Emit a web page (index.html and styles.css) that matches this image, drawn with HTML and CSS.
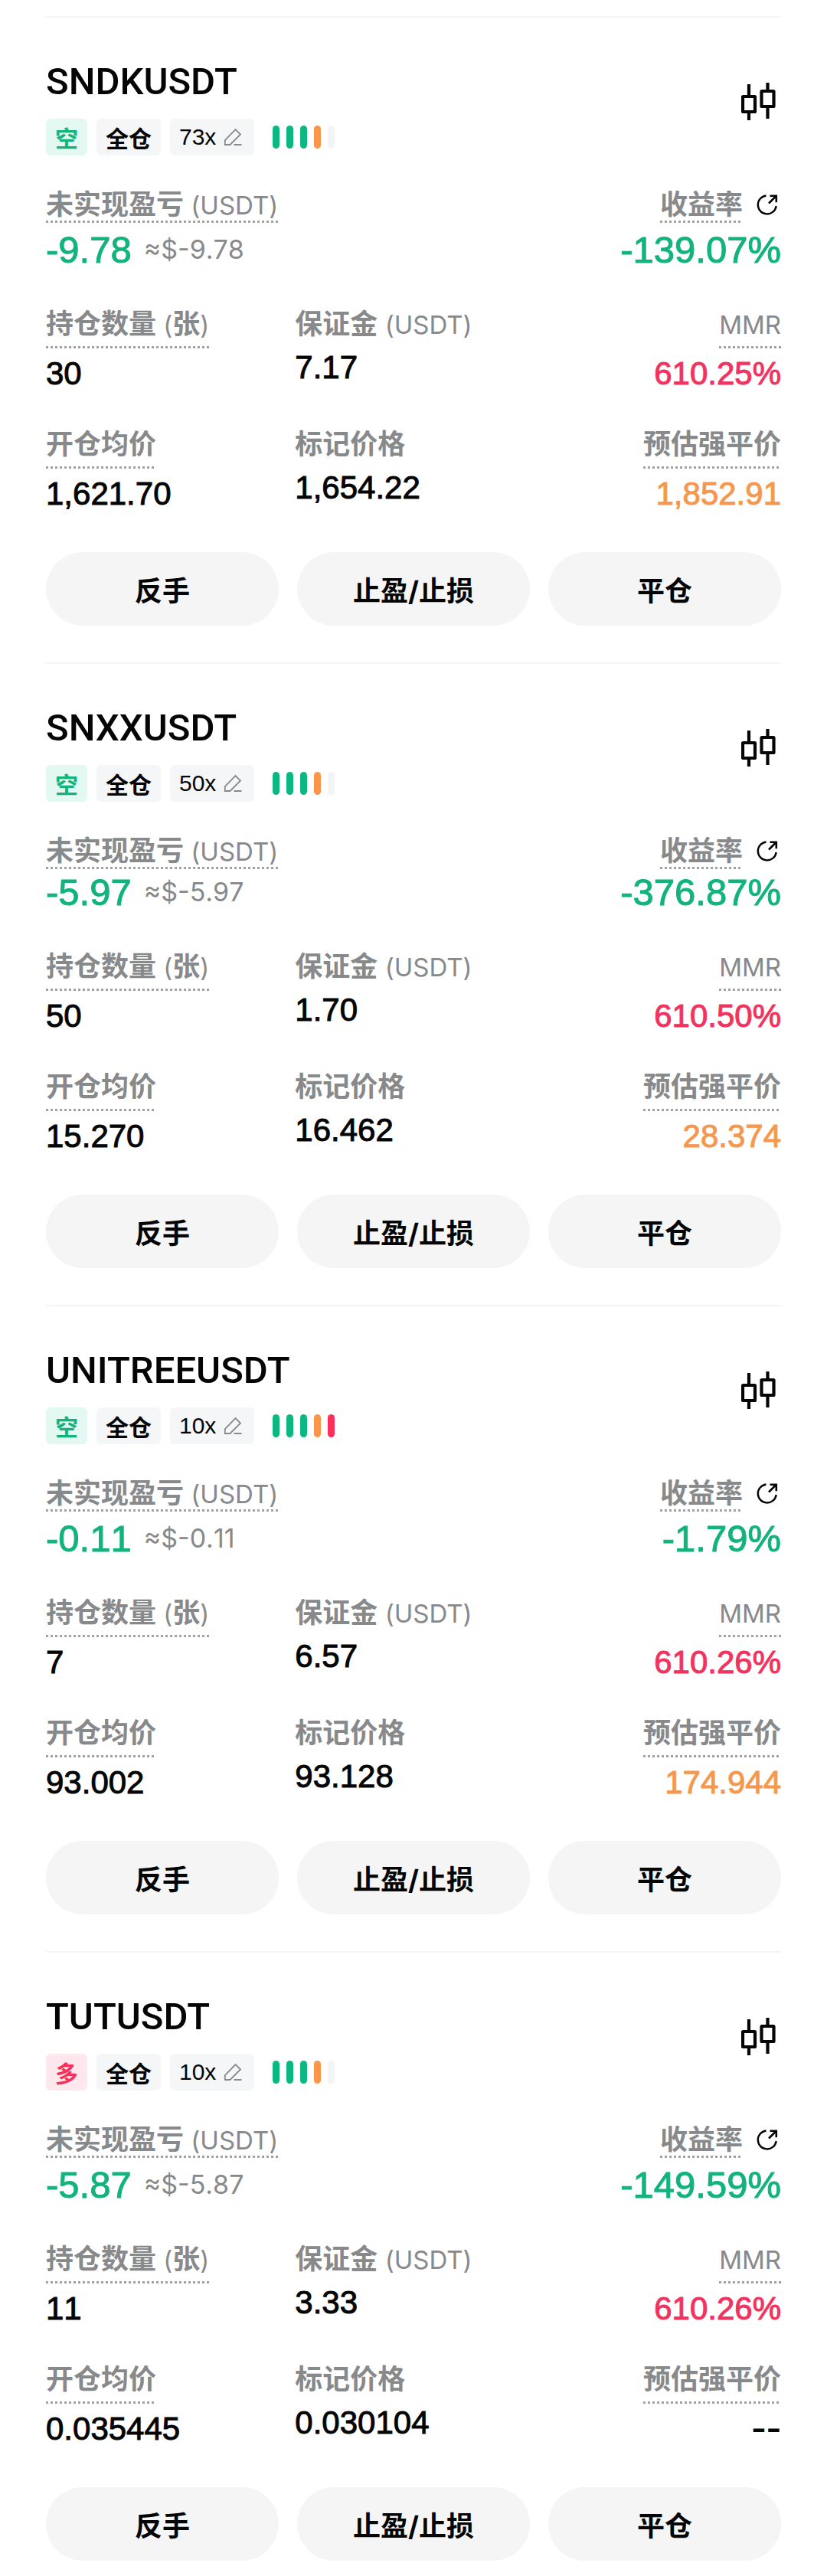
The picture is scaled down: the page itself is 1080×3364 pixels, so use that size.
FILE: index.html
```html
<!DOCTYPE html>
<html lang="zh-CN">
<head>
    <meta charset="UTF-8">
    <meta name="viewport" content="width=device-width, initial-scale=1.0">
    <title>持仓</title>
    <link rel="stylesheet" href="styles.css">
</head>
<body>
    <svg class="sprite" aria-hidden="true">
        <symbol id="icon-chart" viewBox="0 0 48 52">
            <path d="M10 3v15M10 40v10M34.500 1v10M34.500 33v15" fill="none" stroke="currentColor" stroke-width="4.200"/>
            <rect x="2" y="19" width="16" height="20" rx="0.500" fill="none" stroke="currentColor" stroke-width="4.200" stroke-linejoin="round"/>
            <rect x="26.500" y="12" width="16" height="20" rx="0.500" fill="none" stroke="currentColor" stroke-width="4.200" stroke-linejoin="round"/>
        </symbol>
        <symbol id="icon-edit" viewBox="0 0 24 24">
            <path d="M1.800 22v-6L15.500 2l6.500 6.500L8.500 22z M13.500 22H23.500" fill="none" stroke="currentColor" stroke-width="1.800"/>
        </symbol>
        <symbol id="icon-share" viewBox="0 0 28 28">
            <path d="M12.500 2.500A12 12 0 1 0 25.700 16" fill="none" stroke="currentColor" stroke-width="2.400"/>
            <path d="M16 12.500L25.500 3M17.500 2.700h8.300v8.500" fill="none" stroke="currentColor" stroke-width="2.600"/>
        </symbol>
    </svg>

    <main class="positions">
        <section class="card">
            <div class="header">
                <div>
                    <h2 class="symbol">SNDKUSDT</h2>
                    <div class="tags">
                        <span class="tag short">空</span>
                        <span class="tag">全仓</span>
                        <button class="tag leverage">73x <svg><use href="#icon-edit"/></svg></button>
                        <div class="risk"><i></i><i></i><i></i><i class="warn"></i><i class="off"></i></div>
                    </div>
                </div>
                <button class="chart" aria-label="K线"><svg><use href="#icon-chart"/></svg></button>
            </div>
            <div class="pnl">
                <div>
                    <div class="label tip">未实现盈亏<span class="unit"> (USDT)</span></div>
                    <div class="big">-9.78 <small>≈$-9.78</small></div>
                </div>
                <div class="right">
                    <div class="roi"><span class="label tip">收益率</span><button class="share" aria-label="分享"><svg><use href="#icon-share"/></svg></button></div>
                    <div class="big">-139.07%</div>
                </div>
            </div>
            <div class="grid">
                <div>
                    <div class="label tip low">持仓数量<span class="unit"> (</span>张<span class="unit">)</span></div>
                    <div class="value">30</div>
                </div>
                <div>
                    <div class="label">保证金<span class="unit"> (USDT)</span></div>
                    <div class="value">7.17</div>
                </div>
                <div class="right">
                    <div class="label tip low"><span class="unit">MMR</span></div>
                    <div class="value red">610.25%</div>
                </div>
                <div>
                    <div class="label tip low">开仓均价</div>
                    <div class="value">1,621.70</div>
                </div>
                <div>
                    <div class="label">标记价格</div>
                    <div class="value">1,654.22</div>
                </div>
                <div class="right">
                    <div class="label tip low">预估强平价</div>
                    <div class="value orange">1,852.91</div>
                </div>
            </div>
            <div class="actions">
                <button>反手</button>
                <button>止盈/止损</button>
                <button>平仓</button>
            </div>
        </section>

        <section class="card compact">
            <div class="header">
                <div>
                    <h2 class="symbol">SNXXUSDT</h2>
                    <div class="tags">
                        <span class="tag short">空</span>
                        <span class="tag">全仓</span>
                        <button class="tag leverage">50x <svg><use href="#icon-edit"/></svg></button>
                        <div class="risk"><i></i><i></i><i></i><i class="warn"></i><i class="off"></i></div>
                    </div>
                </div>
                <button class="chart" aria-label="K线"><svg><use href="#icon-chart"/></svg></button>
            </div>
            <div class="pnl">
                <div>
                    <div class="label tip">未实现盈亏<span class="unit"> (USDT)</span></div>
                    <div class="big">-5.97 <small>≈$-5.97</small></div>
                </div>
                <div class="right">
                    <div class="roi"><span class="label tip">收益率</span><button class="share" aria-label="分享"><svg><use href="#icon-share"/></svg></button></div>
                    <div class="big">-376.87%</div>
                </div>
            </div>
            <div class="grid">
                <div>
                    <div class="label tip low">持仓数量<span class="unit"> (</span>张<span class="unit">)</span></div>
                    <div class="value">50</div>
                </div>
                <div>
                    <div class="label">保证金<span class="unit"> (USDT)</span></div>
                    <div class="value">1.70</div>
                </div>
                <div class="right">
                    <div class="label tip low"><span class="unit">MMR</span></div>
                    <div class="value red">610.50%</div>
                </div>
                <div>
                    <div class="label tip low">开仓均价</div>
                    <div class="value">15.270</div>
                </div>
                <div>
                    <div class="label">标记价格</div>
                    <div class="value">16.462</div>
                </div>
                <div class="right">
                    <div class="label tip low">预估强平价</div>
                    <div class="value orange">28.374</div>
                </div>
            </div>
            <div class="actions">
                <button>反手</button>
                <button>止盈/止损</button>
                <button>平仓</button>
            </div>
        </section>

        <section class="card">
            <div class="header">
                <div>
                    <h2 class="symbol">UNITREEUSDT</h2>
                    <div class="tags">
                        <span class="tag short">空</span>
                        <span class="tag">全仓</span>
                        <button class="tag leverage">10x <svg><use href="#icon-edit"/></svg></button>
                        <div class="risk"><i></i><i></i><i></i><i class="warn"></i><i class="danger"></i></div>
                    </div>
                </div>
                <button class="chart" aria-label="K线"><svg><use href="#icon-chart"/></svg></button>
            </div>
            <div class="pnl">
                <div>
                    <div class="label tip">未实现盈亏<span class="unit"> (USDT)</span></div>
                    <div class="big">-0.11 <small>≈$-0.11</small></div>
                </div>
                <div class="right">
                    <div class="roi"><span class="label tip">收益率</span><button class="share" aria-label="分享"><svg><use href="#icon-share"/></svg></button></div>
                    <div class="big">-1.79%</div>
                </div>
            </div>
            <div class="grid">
                <div>
                    <div class="label tip low">持仓数量<span class="unit"> (</span>张<span class="unit">)</span></div>
                    <div class="value">7</div>
                </div>
                <div>
                    <div class="label">保证金<span class="unit"> (USDT)</span></div>
                    <div class="value">6.57</div>
                </div>
                <div class="right">
                    <div class="label tip low"><span class="unit">MMR</span></div>
                    <div class="value red">610.26%</div>
                </div>
                <div>
                    <div class="label tip low">开仓均价</div>
                    <div class="value">93.002</div>
                </div>
                <div>
                    <div class="label">标记价格</div>
                    <div class="value">93.128</div>
                </div>
                <div class="right">
                    <div class="label tip low">预估强平价</div>
                    <div class="value orange">174.944</div>
                </div>
            </div>
            <div class="actions">
                <button>反手</button>
                <button>止盈/止损</button>
                <button>平仓</button>
            </div>
        </section>

        <section class="card">
            <div class="header">
                <div>
                    <h2 class="symbol">TUTUSDT</h2>
                    <div class="tags">
                        <span class="tag long">多</span>
                        <span class="tag">全仓</span>
                        <button class="tag leverage">10x <svg><use href="#icon-edit"/></svg></button>
                        <div class="risk"><i></i><i></i><i></i><i class="warn"></i><i class="off"></i></div>
                    </div>
                </div>
                <button class="chart" aria-label="K线"><svg><use href="#icon-chart"/></svg></button>
            </div>
            <div class="pnl">
                <div>
                    <div class="label tip">未实现盈亏<span class="unit"> (USDT)</span></div>
                    <div class="big">-5.87 <small>≈$-5.87</small></div>
                </div>
                <div class="right">
                    <div class="roi"><span class="label tip">收益率</span><button class="share" aria-label="分享"><svg><use href="#icon-share"/></svg></button></div>
                    <div class="big">-149.59%</div>
                </div>
            </div>
            <div class="grid">
                <div>
                    <div class="label tip low">持仓数量<span class="unit"> (</span>张<span class="unit">)</span></div>
                    <div class="value">11</div>
                </div>
                <div>
                    <div class="label">保证金<span class="unit"> (USDT)</span></div>
                    <div class="value">3.33</div>
                </div>
                <div class="right">
                    <div class="label tip low"><span class="unit">MMR</span></div>
                    <div class="value red">610.26%</div>
                </div>
                <div>
                    <div class="label tip low">开仓均价</div>
                    <div class="value">0.035445</div>
                </div>
                <div>
                    <div class="label">标记价格</div>
                    <div class="value">0.030104</div>
                </div>
                <div class="right">
                    <div class="label tip low">预估强平价</div>
                    <div class="value empty">--</div>
                </div>
            </div>
            <div class="actions">
                <button>反手</button>
                <button>止盈/止损</button>
                <button>平仓</button>
            </div>
        </section>
    </main>
</body>
</html>
```
FILE: styles.css
```css
* {
    box-sizing: border-box;
}

body {
    margin: 0;
    background-color: #fff;
    color: #050505;
    font-family: Inter, "Noto Sans CJK SC", sans-serif;
}

button {
    padding: 0;
    border: none;
    background: none;
    color: inherit;
    font-family: inherit;
    cursor: pointer;
}

.sprite {
    display: none;
}

.positions {
    padding: 21px 60px 0;
}

.card {
    border-top: 2px solid #f4f4f4;
    padding: 54px 0 48px;
}

.card:last-child {
    padding-bottom: 20px;
}

.header {
    display: flex;
    justify-content: space-between;
    align-items: flex-start;
}

.symbol {
    margin: 0 0 18px;
    font-family: Roboto, sans-serif;
    font-size: 49px;
    line-height: 60px;
    font-weight: 500;
}

.tags {
    display: flex;
    align-items: center;
    gap: 12px;
}

.tag {
    display: flex;
    align-items: center;
    height: 48px;
    padding: 0 12px;
    border-radius: 6px;
    background-color: #f5f6f7;
    font-size: 30px;
    font-weight: 700;
}

.short {
    background-color: #e3f8f0;
    color: #12b37c;
}

.long {
    background-color: #ffe8ed;
    color: #f6305b;
}

.leverage {
    gap: 10px;
    padding-right: 16px;
    font-family: "Liberation Sans", sans-serif;
    font-weight: 400;
}

.leverage svg {
    width: 24px;
    height: 24px;
    color: #87898b;
}

.risk {
    display: flex;
    gap: 9px;
    margin-left: 12px;
}

.risk i {
    width: 9px;
    height: 30px;
    border-radius: 5px;
    background-color: #0bb880;
}

.risk .warn {
    background-color: #fa9549;
}

.risk .danger {
    background-color: #fb2f5c;
}

.risk .off {
    background-color: #f3f4f4;
}

.chart {
    margin: 30px 4px 0 0;
}

.chart svg {
    display: block;
    width: 48px;
    height: 52px;
}

.pnl {
    display: flex;
    justify-content: space-between;
    margin-top: 40px;
}

.label {
    width: fit-content;
    color: #87898b;
    font-size: 36px;
    line-height: 48px;
    font-weight: 700;
}

.unit {
    font-size: 33px;
    line-height: 1;
    font-weight: 400;
}

/* dotted underline for labels that open a hint */
.tip {
    background: repeating-linear-gradient(to right, #a0a1a3 0 3px, transparent 3px 6px) left bottom / 100% 3px no-repeat;
}

.low {
    padding-bottom: 8px;
}

.right .label {
    margin-left: auto;
}

.roi {
    display: flex;
    justify-content: flex-end;
    align-items: center;
}

.roi .label {
    margin: 0;
}

.share {
    margin: 0 4px 0 18px;
}

.share svg {
    display: block;
    width: 28px;
    height: 28px;
}

.big,
.value {
    font-family: "Liberation Sans", sans-serif;
    font-kerning: none;
    -webkit-text-stroke: 1px currentColor;
}

.big {
    display: flex;
    align-items: center;
    gap: 16px;
    margin-top: 5px;
    color: #12b37c;
    font-size: 49px;
    line-height: 60px;
}

.compact .big {
    margin-top: 0;
}

.right .big {
    justify-content: flex-end;
}

.right .value {
    text-align: right;
}

.big small {
    color: #87898b;
    font-family: Inter, sans-serif;
    font-size: 34px;
    -webkit-text-stroke: 0;
}

.grid {
    display: grid;
    grid-template-columns: repeat(3, 1fr);
    gap: 41px 16px;
    margin-top: 43px;
}

.value {
    margin-top: 6px;
    font-size: 42px;
    line-height: 54px;
}

.empty {
    font-family: Inter, sans-serif;
}

.red {
    color: #f0335f;
}

.orange {
    color: #f5984f;
}

.actions {
    display: grid;
    grid-template-columns: repeat(3, 1fr);
    gap: 24px;
    margin-top: 49px;
}

.actions button {
    height: 96px;
    border-radius: 48px;
    background-color: #f5f5f5;
    font-size: 36px;
    font-weight: 700;
}
```
